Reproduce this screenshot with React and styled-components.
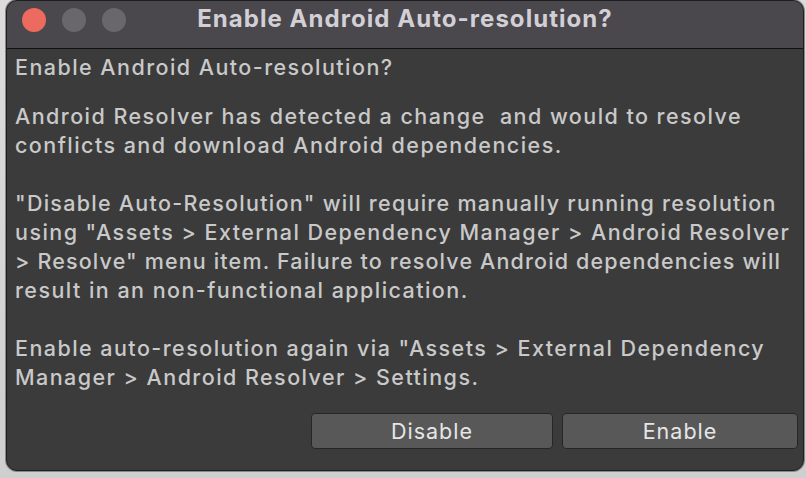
import React from "react";
import styled, { createGlobalStyle } from "styled-components";

const GlobalStyle = createGlobalStyle`
  html, body {
    margin: 0;
    padding: 0;
    background: #d4d4d4;
  }
  body {
    font-family: Inter, "Noto Sans", "Liberation Sans", sans-serif;
  }
`;

const Screen = styled.div`
  width: 806px;
  height: 478px;
  overflow: hidden;
  background: linear-gradient(180deg, #dcdcdc 0%, #cfcfcf 100%);
  padding-left: 6px;
  box-sizing: border-box;
`;

const Window = styled.div`
  width: 798px;
  height: 471px;
  box-sizing: border-box;
  border: 1px solid #1e1e1e;
  border-radius: 11px;
  overflow: hidden;
  background: #3b3b3b;
  display: flex;
  flex-direction: column;
  box-shadow: 0 0 0 1px #8a8a8a;
`;

const TitleBar = styled.div`
  height: 47px;
  flex: none;
  background: #4a484c;
  border-bottom: 1px solid #111;
  display: flex;
  align-items: center;
  position: relative;
`;

const Lights = styled.div`
  display: flex;
  gap: 16px;
  padding-left: 15px;
  padding-bottom: 9px;
`;

const Light = styled.span`
  width: 24px;
  height: 24px;
  border-radius: 50%;
  background: ${(p) => p.color};
`;

const Title = styled.div`
  position: absolute;
  left: 0;
  right: 0;
  top: 3px;
  text-align: center;
  font-weight: 700;
  font-size: 24px;
  line-height: 30px;
  color: #d2d0d6;
  letter-spacing: 1.05px;
`;

const Body = styled.div`
  flex: 1;
  display: flex;
  flex-direction: column;
  padding: 4px 5px 21px 8px;
`;

const Text = styled.p`
  margin: 0 0 ${(p) => (p.last ? 0 : 29)}px;
  font-size: 21.5px;
  font-weight: 500;
  line-height: 29px;
  color: #c9c9c9;
  white-space: pre;
  letter-spacing: 1.45px;
`;

const Line = styled.span`
  display: block;
  letter-spacing: ${(p) => 1.45 + (p.track || 0)}px;
`;

const Heading = styled(Text)`
  margin-bottom: 20px;
`;

const Buttons = styled.div`
  margin-top: auto;
  display: flex;
  justify-content: flex-end;
  gap: 9px;
`;

const Button = styled.button`
  width: ${(p) => p.w}px;
  height: 36px;
  box-sizing: border-box;
  border: 1px solid #262626;
  border-radius: 4px;
  background: #585858;
  color: #e6e6e6;
  font-family: inherit;
  font-size: 21.5px;
  letter-spacing: 1px;
  padding: 0;
`;

export default function App() {
  return (
    <Screen>
      <GlobalStyle />
      <Window>
        <TitleBar>
          <Lights>
            <Light color="#ec6a5e" />
            <Light color="#69676c" />
            <Light color="#69676c" />
          </Lights>
          <Title>Enable Android Auto-resolution?</Title>
        </TitleBar>
        <Body>
          <Heading>Enable Android Auto-resolution?</Heading>
          <Text>
            <Line>Android Resolver has detected a change  and would to resolve</Line>
            <Line>conflicts and download Android dependencies.</Line>
          </Text>
          <Text>
            <Line track={-0.18}>"Disable Auto-Resolution" will require manually running resolution</Line>
            <Line>using "Assets &gt; External Dependency Manager &gt; Android Resolver</Line>
            <Line track={-0.3}>&gt; Resolve" menu item. Failure to resolve Android dependencies will</Line>
            <Line>result in an non-functional application.</Line>
          </Text>
          <Text last>
            <Line>Enable auto-resolution again via "Assets &gt; External Dependency</Line>
            <Line>Manager &gt; Android Resolver &gt; Settings.</Line>
          </Text>
          <Buttons>
            <Button w={242}>Disable</Button>
            <Button w={236}>Enable</Button>
          </Buttons>
        </Body>
      </Window>
    </Screen>
  );
}
